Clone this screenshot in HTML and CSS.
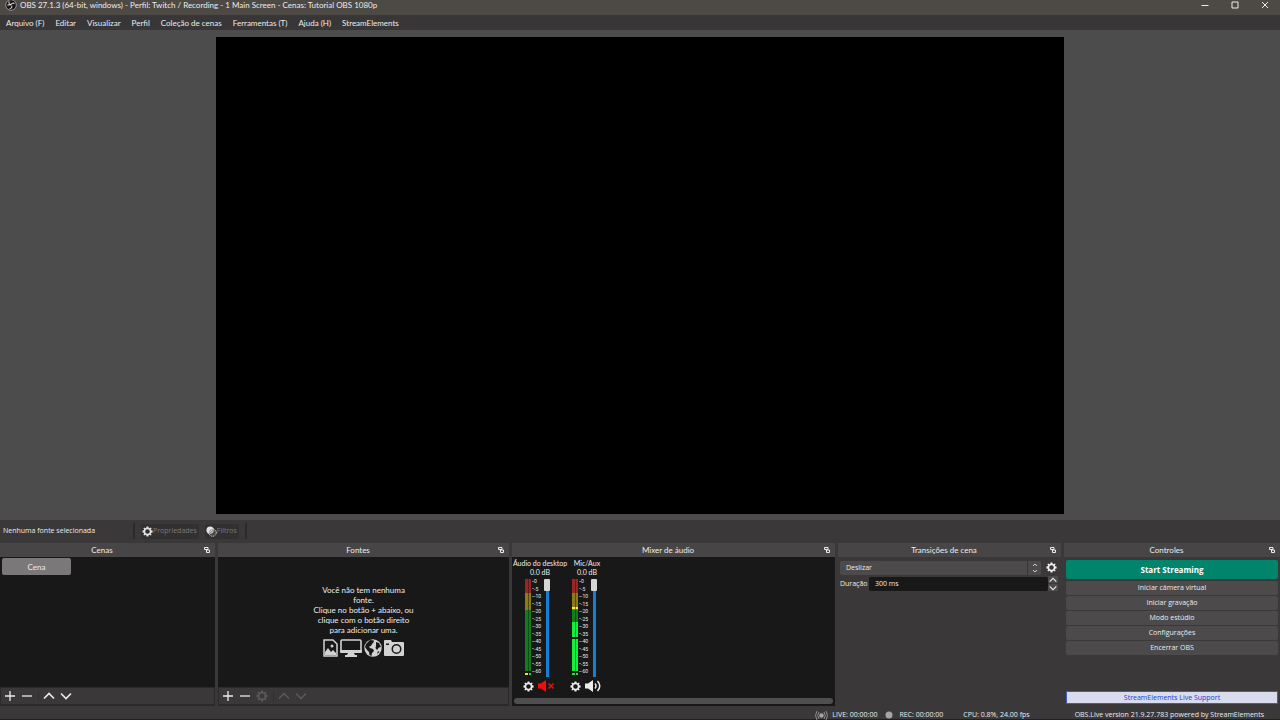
FILE: index.html
```html
<!DOCTYPE html>
<html lang="pt-BR">
<head>
<meta charset="utf-8">
<title>OBS 27.1.3</title>
<link rel="stylesheet" href="styles.css">
</head>
<body>
<svg class="sprites" aria-hidden="true">
  <symbol id="gear" viewBox="0 0 24 24"><path fill="currentColor" fill-rule="evenodd" d="M10 1h4l.6 3 2 .9L19.300 3.200 21 5l-1.700 2.500.9 2 2.900.5v4l-2.900.6-.9 2L21 19l-1.800 1.900-2.600-1.700-2 .8-.6 3h-4l-.6-3-2-.8L4.800 20.900 3 19l1.700-2.400-.9-2L1 14v-4l2.900-.5.8-2L3 5l1.700-1.800 2.700 1.700 2-.9zM12 7a5 5 0 1 0 0 10 5 5 0 0 0 0-10z"/></symbol>
  <symbol id="plus" viewBox="0 0 12 12"><path d="M6 1v10M1 6h10" stroke="currentColor" stroke-width="1.300"/></symbol>
  <symbol id="minus" viewBox="0 0 12 12"><path d="M1 6h10" stroke="currentColor" stroke-width="1.300"/></symbol>
  <symbol id="up" viewBox="0 0 12 12"><path d="M1 8.500l5-5 5 5" fill="none" stroke="currentColor" stroke-width="1.600"/></symbol>
  <symbol id="down" viewBox="0 0 12 12"><path d="M1 3.500l5 5 5-5" fill="none" stroke="currentColor" stroke-width="1.600"/></symbol>
  <symbol id="float" viewBox="0 0 6 6"><path d="M.5 .5h3.500v2h-3.500zM2 3h3.500v2.500H2.500V3" fill="none" stroke="currentColor"/></symbol>
</svg>
<div class="app">
  <header class="titlebar">
    <svg class="logo" viewBox="0 0 12 12"><circle cx="6" cy="5" r="5.300" fill="#171615" stroke="#bbb" stroke-width=".7"/><path d="M4.200 1.300c-.8 1.600.2 3 1.800 3.200M9.500 3.600C8.200 2.600 6.500 3.300 6 4.800M4.600 8.600c1.600 0 2.700-1.400 2-3M2.500 5.500c.8-1 2.300-1 3.200-.3" fill="none" stroke="#ccc" stroke-width="1.100"/></svg>
    <h1>OBS 27.1.3 (64-bit, windows) - Perfil: Twitch / Recording - 1 Main Screen - Cenas: Tutorial OBS 1080p</h1>
    <div class="winbtns">
      <button aria-label="Minimizar"><svg viewBox="0 0 8 8"><path d="M.5 4.500h7" stroke="currentColor"/></svg></button>
      <button aria-label="Maximizar"><svg viewBox="0 0 8 8"><path d="M1 1h6v6H1z" fill="none" stroke="currentColor"/></svg></button>
      <button aria-label="Fechar"><svg viewBox="0 0 8 8"><path d="M1 1l6 6M7 1L1 7" stroke="currentColor"/></svg></button>
    </div>
  </header>
  <nav class="menu">
    <button>Arquivo (F)</button><button>Editar</button><button>Visualizar</button><button>Perfil</button><button>Coleção de cenas</button><button>Ferramentas (T)</button><button>Ajuda (H)</button><button>StreamElements</button>
  </nav>
  <main class="preview"><div class="canvas"></div></main>
  <section class="context">
    <span class="selected">Nenhuma fonte selecionada</span>
    <button disabled><svg class="ic light" viewBox="0 0 24 24"><use href="#gear"/></svg>Propriedades</button>
    <button disabled><svg class="ic light" viewBox="0 0 12 12"><circle cx="4.500" cy="4.500" r="4" fill="currentColor"/><circle cx="7.200" cy="7.200" r="4" fill="#555" fill-opacity=".6" stroke="currentColor" stroke-dasharray="1.400 .9"/><path d="M4 7l3-3M5 8.500l3.500-3.500" stroke="#fff" stroke-width=".7"/></svg>Filtros</button>
    <i></i>
  </section>
  <div class="docks">
    <section class="dock">
      <h2><span>Cenas</span><svg viewBox="0 0 6 6"><use href="#float"/></svg></h2>
      <div class="well"><button class="scene">Cena</button></div>
      <div class="tools">
        <button aria-label="Adicionar"><svg><use href="#plus"/></svg></button><button aria-label="Remover"><svg><use href="#minus"/></svg></button><i></i><button aria-label="Subir"><svg><use href="#up"/></svg></button><button aria-label="Descer"><svg><use href="#down"/></svg></button>
      </div>
    </section>
    <section class="dock">
      <h2><span>Fontes</span><svg viewBox="0 0 6 6"><use href="#float"/></svg></h2>
      <div class="well empty">
        <p>Você não tem nenhuma<br>fonte.<br>Clique no botão + abaixo, ou<br>clique com o botão direito<br>para adicionar uma.</p>
        <div class="kinds">
          <svg width="15" height="18" viewBox="0 0 15 18"><path d="M1 1h9l4 4v12H1z" fill="none" stroke="currentColor" stroke-width="1.500"/><path d="M2 16v-3l3-4 3 4 2-2 3 3v2z" fill="currentColor"/><circle cx="9" cy="7" r="1.500" fill="currentColor"/></svg>
          <svg width="22" height="18" viewBox="0 0 22 18"><rect x="1" y="1" width="20" height="12" rx="1" fill="none" stroke="currentColor" stroke-width="1.600"/><path d="M0 11h22v2q0 1-1 1h-7l1 2h2v2H5v-2h2l1-2H1q-1 0-1-1z" fill="currentColor"/></svg>
          <svg width="18" height="18" viewBox="0 0 18 18"><circle cx="9" cy="9" r="8.700" fill="currentColor"/><path d="M6 1l4 .5-.5 2L8 5l-1 2-2 .5 1 1.500 3 1 1 2-2 2-.5 3-2-1-.5-3-2-2L1 8 2 5zM12 3l3 1 2 4-2 .5-2 2.500-1.500-2 .5-2zM14 12l1.500 1-2.500 2z" fill="#191819"/></svg>
          <svg width="20" height="18" viewBox="0 0 20 18"><path fill="currentColor" fill-rule="evenodd" d="M1 1h6l1 2h11q1 0 1 1v12q0 1-1 1H1q-1 0-1-1V2q0-1 1-1zM12.500 5a5 5 0 1 0 0 10 5 5 0 0 0 0-10zM2 4.500v1.500h3V4.500z"/><circle cx="12.500" cy="10" r="3.500" fill="currentColor"/></svg>
        </div>
      </div>
      <div class="tools">
        <button aria-label="Adicionar"><svg><use href="#plus"/></svg></button><button aria-label="Remover"><svg><use href="#minus"/></svg></button><button disabled aria-label="Propriedades"><svg viewBox="0 0 24 24"><use href="#gear"/></svg></button><i></i><button disabled aria-label="Subir"><svg><use href="#up"/></svg></button><button disabled aria-label="Descer"><svg><use href="#down"/></svg></button>
      </div>
    </section>
    <section class="dock">
      <h2><span>Mixer de áudio</span><svg viewBox="0 0 6 6"><use href="#float"/></svg></h2>
      <div class="well mixer">
        <div class="channels">
          <div class="channel">
            <label for="v1">Áudio do desktop</label><output>0.0 dB</output>
            <div class="levels">
              <svg class="meter" viewBox="0 0 6 97" preserveAspectRatio="none"><path fill="#9c2424" d="M0 0h6v14H0z"/><path fill="#8b7d13" d="M0 14h6v17H0z"/><path fill="#107e1a" d="M0 31h6v61H0z"/><path fill="#171717" fill-opacity=".5" d="M3 0h1v92H3z"/><path fill="#e8e337" d="M0 94h3v2H0z"/><path fill="#23df3a" d="M4 94h2v2H4z"/></svg>
              <div class="scale"><b>0</b><b>-5</b><b>-10</b><b>-15</b><b>-20</b><b>-25</b><b>-30</b><b>-35</b><b>-40</b><b>-45</b><b>-50</b><b>-55</b><b>-60</b></div>
              <input id="v1" type="range" value="100">
            </div>
            <div class="chbtns"><button aria-label="Configurar"><svg viewBox="0 0 24 24"><use href="#gear"/></svg></button><button class="muted" aria-label="Ativar som"><svg class="spk" viewBox="0 0 16 12"><path d="M0 3.500h3L8 0v12L3 8.500H0z" fill="currentColor"/><path d="M10.500 3.500l5 5M15.500 3.500l-5 5" stroke="currentColor" stroke-width="1.500"/></svg></button></div>
          </div>
          <div class="channel mic">
            <label for="v2">Mic/Aux</label><output>0.0 dB</output>
            <div class="levels">
              <svg class="meter" viewBox="0 0 6 97" preserveAspectRatio="none"><path fill="#9c2424" d="M0 0h6v14H0z"/><path fill="#8b7d13" d="M0 14h6v17H0z"/><path fill="#107e1a" d="M0 31h6v12H0z"/><path fill="#13ef3e" d="M0 43h6v49H0z"/><path fill="#f4ef3a" d="M0 28h6v2H0z"/><path fill="#171717" d="M0 58h6v2H0z"/><path fill="#171717" fill-opacity=".5" d="M3 0h1v92H3z"/><path fill="#23df3a" d="M0 94h3v2H0zM4 94h2v2H4z"/></svg>
              <div class="scale"><b>0</b><b>-5</b><b>-10</b><b>-15</b><b>-20</b><b>-25</b><b>-30</b><b>-35</b><b>-40</b><b>-45</b><b>-50</b><b>-55</b><b>-60</b></div>
              <input id="v2" type="range" value="100">
            </div>
            <div class="chbtns"><button aria-label="Configurar"><svg viewBox="0 0 24 24"><use href="#gear"/></svg></button><button aria-label="Silenciar"><svg class="spk" viewBox="0 0 16 12"><path d="M0 3.500h3L8 0v12L3 8.500H0z" fill="currentColor"/><path d="M10 3.500q2 2.500 0 5M12.500 1q4.500 5 0 10" fill="none" stroke="currentColor" stroke-width="1.500"/></svg></button></div>
          </div>
        </div>
        <div class="scrollbar"></div>
      </div>
    </section>
    <section class="dock">
      <h2><span>Transições de cena</span><svg viewBox="0 0 6 6"><use href="#float"/></svg></h2>
      <div class="transitions">
        <div class="row">
          <div class="combo"><select aria-label="Transição"><option>Deslizar</option></select><span class="arrows"><svg viewBox="0 0 6 10"><path d="M1 3l2-2 2 2M1 7l2 2 2-2" fill="none" stroke="currentColor" stroke-width=".8"/></svg></span></div>
          <button class="gear" aria-label="Configurar transição"><svg viewBox="0 0 24 24"><use href="#gear"/></svg></button>
        </div>
        <div class="row">
          <label for="dur">Duração</label><input id="dur" type="text" value="300 ms">
          <div class="spin"><button aria-label="Aumentar"><svg viewBox="0 0 12 12"><use href="#up"/></svg></button><button aria-label="Diminuir"><svg viewBox="0 0 12 12"><use href="#down"/></svg></button></div>
        </div>
      </div>
    </section>
    <section class="dock last">
      <h2><span>Controles</span><svg viewBox="0 0 6 6"><use href="#float"/></svg></h2>
      <div class="controls">
        <button class="start">Start Streaming</button>
        <button>Iniciar câmera virtual</button>
        <button>Iniciar gravação</button>
        <button>Modo estúdio</button>
        <button>Configurações</button>
        <button>Encerrar OBS</button>
        <button class="support">StreamElements Live Support</button>
      </div>
    </section>
  </div>
  <footer class="status">
    <span class="live"><svg width="13" height="9" viewBox="0 0 13 9"><circle cx="6.500" cy="4.500" r="2.200" fill="currentColor"/><path d="M4 1q-2.500 3.500 0 7M9 1q2.500 3.500 0 7M2 0q-3 4.500 0 9M11 0q3 4.500 0 9" fill="none" stroke="currentColor" stroke-width=".8"/></svg>LIVE: 00:00:00</span>
    <span class="rec"><svg width="8" height="8" viewBox="0 0 8 8"><circle cx="4" cy="4" r="3.500" fill="currentColor"/></svg>REC: 00:00:00</span>
    <span class="cpu">CPU: 0.8%, 24.00 fps</span>
    <span class="version">OBS.Live version 21.9.27.783 powered by StreamElements</span>
  </footer>
</div>
</body>
</html>
```
FILE: styles.css
```css
* { box-sizing: border-box; margin: 0; padding: 0; }
body { background: #3a3839; color: #ececec; font-family: Lato, "Noto Sans", sans-serif; font-size: 8px; line-height: 10px; overflow: hidden; }
button, input, select { font: inherit; color: inherit; background: none; border: 0; }
button { display: flex; align-items: center; justify-content: center; white-space: nowrap; }
svg { display: block; flex: none; }
.sprites { display: none; }
.app { display: flex; flex-direction: column; height: 100vh; }

.titlebar { flex: none; height: 15px; background: #4d4945; display: flex; align-items: flex-start; padding-left: 5px; }
.logo { width: 12px; height: 12px; }
.titlebar h1 { flex: 1; font-size: 8px; font-weight: 400; line-height: 11px; padding-left: 3px; white-space: nowrap; }
.winbtns { display: flex; }
.winbtns button { width: 30px; height: 10px; }
.winbtns svg { width: 8px; height: 8px; }

.menu { flex: none; height: 15px; background: #383637; display: flex; align-items: center; gap: 11px; padding: 0 6px; }

.preview { flex: 1; min-height: 0; background: #4c4c4c; display: flex; justify-content: center; padding: 7px 0 6px; }
.canvas { height: 100%; aspect-ratio: 16 / 9; background: #000; }

.context, .transitions, .controls, .status { font-family: "Open Sans", "Noto Sans", sans-serif; font-size: 7px; }
.context { flex: none; height: 23px; display: flex; align-items: center; gap: 6px; padding: 0 3px 1px; }
.context .selected { width: 132px; height: 16px; line-height: 16px; border-right: 2px solid #2b292a; }
.context button { height: 15px; background: #323031; color: #7c787c; border-radius: 2px; padding: 0 2px 0 1px; }
.context i { width: 2px; height: 16px; background: #2b292a; }
.ic { width: 11px; height: 11px; }
.light { color: #e2e2e2; }

.docks { flex: none; display: grid; grid-template-columns: 215fr 291fr 323fr 223fr 216fr; gap: 3px; height: 163px; }
.dock { display: flex; flex-direction: column; min-width: 0; background: #3a3839; }
.dock h2 { flex: none; height: 14px; background: #474546; font-family: Lato, sans-serif; font-size: 8px; font-weight: 400; line-height: 14px; display: flex; align-items: center; padding: 0 5px 0 0; }
.dock h2 span { flex: 1; text-align: center; }
.dock h2 svg { width: 6px; height: 6px; }
.well { flex: 1; min-height: 0; background: #191819; }
.tools { flex: none; height: 19px; border: 1px solid #2b292a; border-bottom-width: 2px; display: flex; align-items: center; gap: 5px; padding-left: 3px; }
.tools svg { width: 12px; height: 12px; }
.tools i { width: 1px; height: 12px; background: #323031; margin-right: -1px; }
.tools button:disabled { color: #5b595a; }
.scene { width: 69px; height: 17px; margin: 1px 2px; background: #7a7879; border-radius: 2px; }
.empty { display: flex; flex-direction: column; align-items: center; justify-content: center; gap: 4px; padding-bottom: 2px; text-align: center; }
.kinds { display: flex; gap: 2px; color: #d2d2d2; }

.mixer { display: flex; flex-direction: column; justify-content: space-between; }
.channels { display: flex; padding: 2px 0 0 4px; }
.channel { width: 48px; display: flex; flex-direction: column; align-items: center; font-size: 7px; line-height: 9px; white-space: nowrap; }
.levels { display: flex; height: 98px; margin: 2px 4px 0 0; }
.meter { width: 6px; height: 97px; }
.scale { display: flex; flex-direction: column; justify-content: space-between; height: 94px; width: 13px; padding-left: 1px; font-family: Roboto, sans-serif; }
.scale b { font-size: 5px; font-weight: 400; line-height: 4px; height: 4px; display: flex; align-items: center; }
.scale b::before { content: ""; width: 2px; height: 1px; background: #777; }
.levels input { appearance: none; writing-mode: vertical-lr; direction: rtl; width: 7px; height: 98px; }
.levels input::-webkit-slider-runnable-track { width: 7px; background: linear-gradient(90deg, transparent 2px, #157fd8 2px, #157fd8 5px, transparent 5px); }
.levels input::-webkit-slider-thumb { appearance: none; width: 6px; height: 12px; background: #d5d5d5; border-radius: 1px; }
.chbtns { display: flex; gap: 4px; height: 18px; align-items: center; margin-right: 3px; }
.chbtns svg { width: 11px; height: 11px; }
.chbtns .spk { width: 16px; height: 12px; }
.muted { color: #f20d0d; }
.mic { margin-left: -1px; }
.scrollbar { height: 6px; margin: 0 2px 2px; border-radius: 3px; background: #504e4f; }

.transitions { padding: 3px 3px 0 2px; display: flex; flex-direction: column; gap: 1px; }
.row { display: flex; align-items: center; height: 15px; }
.combo { flex: 1; height: 14px; background: #4c4a4b; border-radius: 2px; display: flex; align-items: center; }
.combo select { flex: 1; appearance: none; padding-left: 6px; height: 14px; }
.arrows { width: 14px; height: 14px; border-left: 1px solid #363435; display: flex; align-items: center; justify-content: center; }
.arrows svg { width: 6px; height: 10px; }
.gear { width: 17px; justify-content: flex-end; padding-right: 1px; }
.gear svg { width: 11px; height: 11px; }
.row label { width: 29px; }
.row input { flex: 1; min-width: 0; height: 14px; background: #191819; border-radius: 2px; padding-left: 6px; }
.spin { width: 10px; display: flex; flex-direction: column; gap: 1px; }
.spin button { height: 7px; background: #4c4a4b; border-radius: 1px; }
.spin svg { width: 8px; height: 8px; }

.controls { flex: 1; display: flex; flex-direction: column; gap: 1px; padding: 3px 2px 2px; }
.controls button { height: 14px; background: #4c4a4b; border-radius: 2px; }
.controls .start { height: 19px; margin-bottom: 1px; background: #00846b; color: #fff; font-size: 8px; font-weight: 700; }
.controls .support { height: 13px; margin-top: auto; background: #d8dcec; border: 1px solid #3f5bc0; border-radius: 0; color: #1540dd; }

.status { flex: none; height: 14px; display: flex; align-items: center; padding: 5px 16px 0 0; justify-content: flex-end; border-bottom: 1px solid #222021; white-space: nowrap; }
.status span { display: flex; align-items: center; }
.status svg { color: #a5a5a5; }
.live { gap: 4px; margin-right: 8px; }
.rec { gap: 6px; margin-right: 20px; }
.cpu { margin-right: 45px; }
```
